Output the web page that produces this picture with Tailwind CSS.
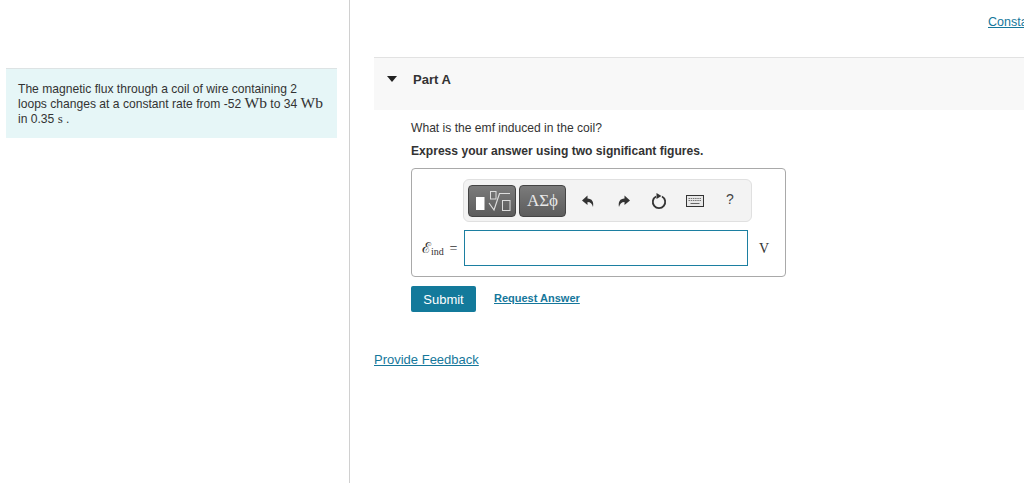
<!DOCTYPE html>
<html lang="en">
<head>
    <meta charset="UTF-8">
    <title>Part A</title>
    <script src="https://cdn.jsdelivr.net/npm/@tailwindcss/browser@4"></script>
</head>
<body class="h-[483px] overflow-hidden bg-white font-['Liberation_Sans',sans-serif] text-[#333]">
    <div class="flex h-[483px]">
        <!-- problem statement -->
        <div class="w-[350px] shrink-0 border-r border-[#d0d0d0] pt-[68px] pl-[6px] pr-3">
            <div class="h-[70px] border-t border-[#dde3e4] bg-[#e6f6f7] pt-[13px] pl-3 pr-2 text-[12.1px] leading-[15px] whitespace-nowrap">
                The magnetic flux through a coil of wire containing 2<br>loops changes at a constant rate from -52 <span class="font-['Liberation_Serif',serif] text-[15.5px] leading-[0]">Wb</span> to 34 <span class="font-['Liberation_Serif',serif] text-[15.5px] leading-[0]">Wb</span><br>in 0.35 <span class="font-['Liberation_Serif',serif] text-[13px] leading-[0]">s</span> .
            </div>
        </div>

        <div class="min-w-0 flex-1 overflow-hidden">
            <div class="flex h-[57px] justify-end pt-[14px]">
                <a class="mr-[-30px] w-[66px] text-[12.5px] leading-4 whitespace-nowrap text-[#15779b] underline">Constants</a>
            </div>
            <div class="ml-6">
                <div class="flex h-[53px] items-start border-t border-[#e2e2e2] bg-[#f8f8f8] pt-[14px]">
                    <svg class="mt-[4px] ml-[13px]" width="10" height="6" viewBox="0 0 10 6"><path d="M0 0h10L5 6z" fill="#222"/></svg>
                    <span class="ml-[16px] text-[13px] leading-4 font-bold">Part A</span>
                </div>
                <div class="pl-[37px]">
                    <p class="mt-[10px] text-[12.1px] leading-4">What is the emf induced in the coil?</p>
                    <p class="mt-[7px] text-[12.1px] leading-4 font-bold">Express your answer using two significant figures.</p>

                    <div class="mt-[9px] h-[109px] w-[375px] rounded-[4px] border border-[#a9a9a9] pt-[10px]">
                        <!-- toolbar -->
                        <div class="ml-[51px] flex h-[43px] w-[289px] items-center rounded-[6px] border border-[#e0e0e0] bg-[#f3f3f3] pl-[4px]">
                            <div class="h-[32px] w-[48px] rounded-[4px] border border-[#444] bg-gradient-to-b from-[#7b7b7b] to-[#5c5c5c]">
                                <svg width="46" height="30" viewBox="0 0 46 30" fill="none">
                                    <rect x="7" y="11" width="8.500" height="13" fill="#fff"/>
                                    <rect x="21.500" y="5.500" width="5.500" height="7.500" stroke="#ddd"/>
                                    <path d="M20 17l5 7 5.500-16.500H41" stroke="#ddd" stroke-width="1.200"/>
                                    <rect x="33.500" y="14.500" width="7.500" height="10" stroke="#ddd"/>
                                </svg>
                            </div>
                            <div class="ml-[3px] flex h-[32px] w-[47px] items-center justify-center rounded-[4px] border border-[#444] bg-gradient-to-b from-[#7b7b7b] to-[#5c5c5c] font-['Liberation_Serif',serif] text-[17px] text-[#e8e8e8]">ΑΣϕ</div>
                            <svg class="ml-[15px]" width="14" height="14" viewBox="0 0 14 14"><path d="M6.500 1.500L1 6.500l5.500 4.500V8c3 0 4.500 1.500 5.500 5 1-5-1-8.500-5.500-8.500z" fill="#333"/></svg>
                            <svg class="ml-[22px]" width="14" height="14" viewBox="0 0 14 14"><path d="M7.500 1.500L13 6.500 7.500 11V8c-3 0-4.500 1.500-5.500 5-1-5 1-8.500 5.500-8.500z" fill="#333"/></svg>
                            <svg class="ml-[20px]" width="16" height="18" viewBox="0 0 16 18" fill="none"><path d="M5 4.500a6.200 6.200 0 1 0 6 0" stroke="#333" stroke-width="1.800"/><path d="M5.500 1l5 3-5 3z" fill="#333"/></svg>
                            <svg class="ml-[19px]" width="18" height="12" viewBox="0 0 18 12" fill="none">
                                <rect x=".5" y=".5" width="17" height="11" fill="#e8e8e8" stroke="#333"/>
                                <path d="M2.500 3.500h13M2.500 5.500h13" stroke="#777" stroke-dasharray="1.500 .7"/>
                                <path d="M4.500 8.500h9" stroke="#666"/>
                            </svg>
                            <span class="mb-[3px] ml-[22px] text-[14px] leading-none text-[#444]">?</span>
                        </div>
                        <!-- answer row -->
                        <div class="mt-[8px] flex items-center">
                            <span class="ml-[10px] w-[42px] font-['Liberation_Serif',serif] text-[15px] whitespace-nowrap text-[#333]">ℰ<sub class="text-[10px]">ind</sub> <span class="ml-[2px] text-[14px]">=</span></span>
                            <div class="h-[36px] w-[284px] border border-[#1c7fa1] bg-white"></div>
                            <span class="ml-[11px] font-['Liberation_Serif',serif] text-[14px]">V</span>
                        </div>
                    </div>

                    <div class="mt-[9px] flex items-center">
                        <button class="h-[26px] w-[65px] rounded-[2px] bg-[#137a9b] pt-px text-[13px] text-white">Submit</button>
                        <a class="mb-[2px] ml-[18px] text-[11px] font-bold text-[#15779b] underline">Request Answer</a>
                    </div>
                </div>
                <a class="mt-10 block text-[13px] leading-4 text-[#15779b] underline">Provide Feedback</a>
            </div>
        </div>
    </div>
</body>
</html>
